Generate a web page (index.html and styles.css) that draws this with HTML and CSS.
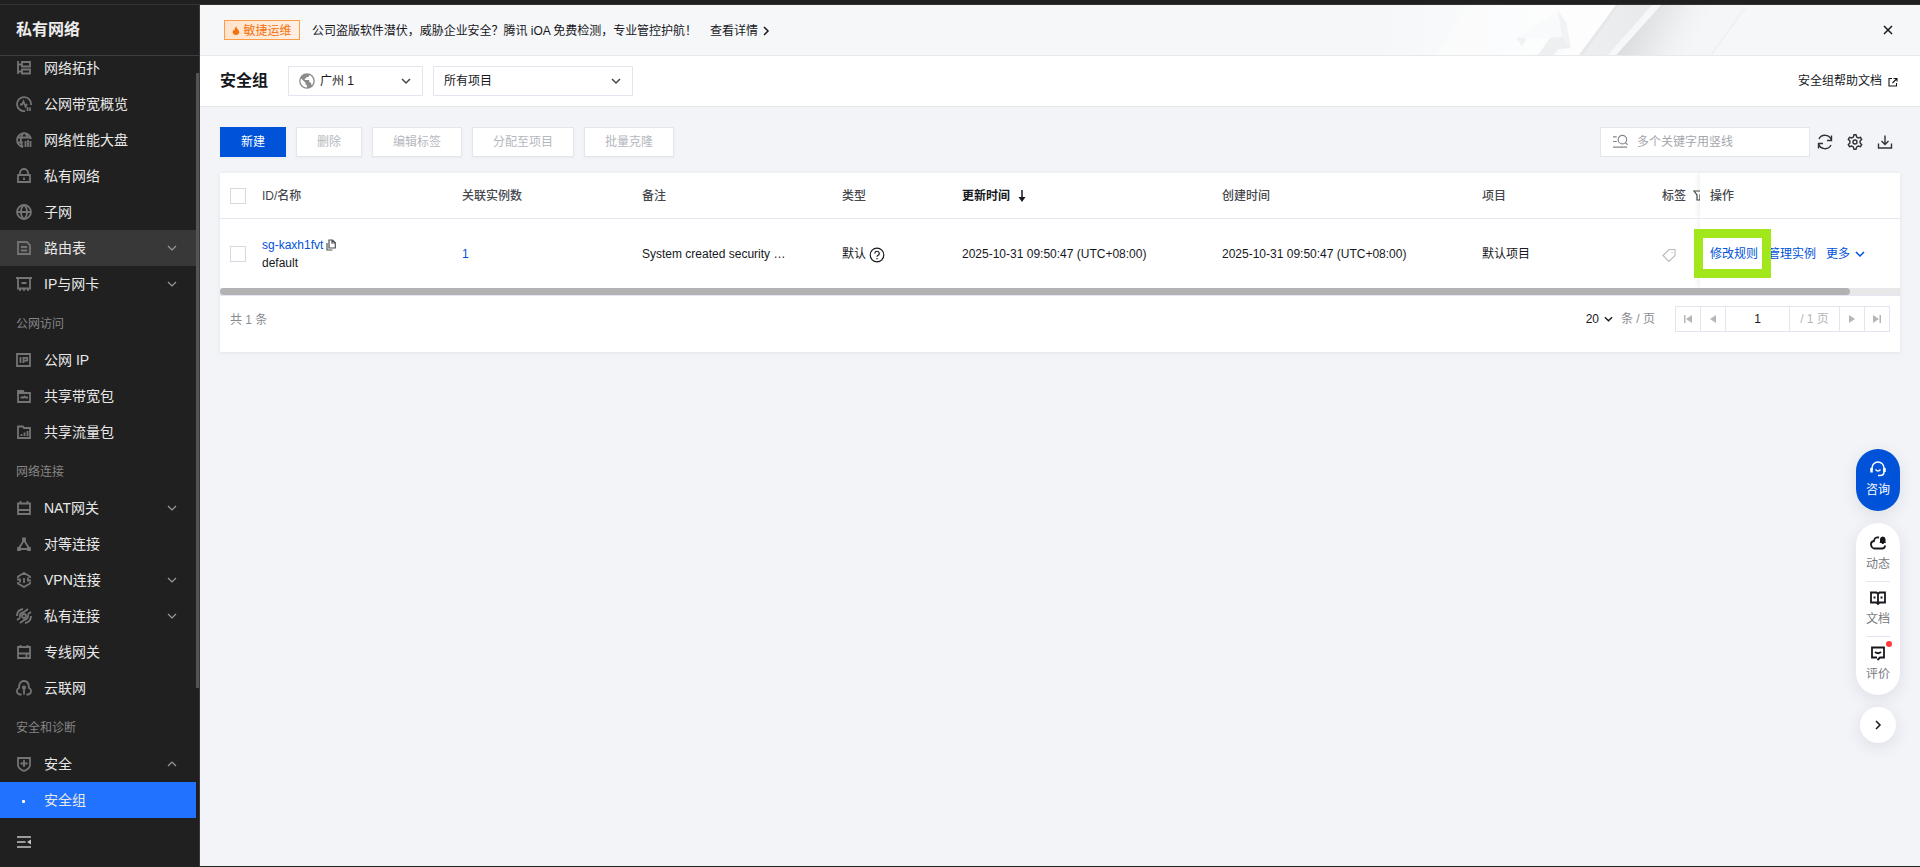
FILE: index.html
```html
<!DOCTYPE html>
<html lang="zh-CN">
<head>
<meta charset="utf-8">
<title>安全组 - 私有网络</title>
<link rel="stylesheet" href="styles.css">
</head>
<body>
<div class="topbar"></div>
<div class="layout">
  <aside class="sidebar">
    <h2 class="side-title">私有网络</h2>
    <div class="side-body">
      <nav class="menu">
        <a class="item first"><svg class="ic" viewBox="0 0 16 16"><path d="M2 1v13M2 4.500h4M2 11.500h4M6 2h8v4.500H6zM6 9.500h8v4H6z"/></svg><span>网络拓扑</span></a>
        <a class="item"><svg class="ic" viewBox="0 0 16 16"><path d="M9 15A7 7 0 1 1 15 9M4 8.500h2l1.500-3 2 5 1.500-2.500M11.500 11v4M14 11.500v3.500"/></svg><span>公网带宽概览</span></a>
        <a class="item"><svg class="ic" viewBox="0 0 16 16"><path d="M7 15A7 7 0 1 1 15 7M1.500 5.500h13M1.500 10.500H7M7.500 1C4 4 4 12 7 15M8.500 1q3 2 3 5M9.500 9v6M12 8v7M14.500 9v6"/></svg><span>网络性能大盘</span></a>
        <a class="item"><svg class="ic" viewBox="0 0 16 16"><path d="M2 7h12v7H2zM4 7V5a4 4 0 0 1 8 0v2M8 9.500v2.500"/></svg><span>私有网络</span></a>
        <a class="item"><svg class="ic" viewBox="0 0 16 16"><circle cx="8" cy="8" r="7"/><path d="M1 8h14M8 1C4 4 4 12 8 15M8 1c4 3 4 11 0 14"/></svg><span>子网</span></a>
        <a class="item hover"><svg class="ic" viewBox="0 0 16 16"><path d="M2 2h9l3 3v9H2zM5 7h6M5 10.500h6"/></svg><span>路由表</span><svg class="chev" viewBox="0 0 10 10"><path d="M1 3l4 4 4-4"/></svg></a>
        <a class="item"><svg class="ic" viewBox="0 0 16 16"><path d="M0 2h16M2 2v10.500h12V2M5.500 7h5M4 12v3M8 12v3M12 12v3"/></svg><span>IP与网卡</span><svg class="chev" viewBox="0 0 10 10"><path d="M1 3l4 4 4-4"/></svg></a>
        <div class="group">公网访问</div>
        <a class="item"><svg class="ic" viewBox="0 0 16 16"><path d="M1 2h13v12H1zM4.500 5v6M7.500 11V5.800h3.700v2.800H7.500"/></svg><span>公网 IP</span></a>
        <a class="item"><svg class="ic" viewBox="0 0 16 16"><path d="M2 14V3h5l1 2h6v9zM2 5h7M4.500 9.500h3l1-1 1 1H12"/></svg><span>共享带宽包</span></a>
        <a class="item"><svg class="ic" viewBox="0 0 16 16"><path d="M2 14V2.500h5l1 1.500h6v10zM5.500 12v-2M8.500 12V8.500M11.500 12V7"/></svg><span>共享流量包</span></a>
        <div class="group">网络连接</div>
        <a class="item"><svg class="ic" viewBox="0 0 16 16"><path d="M2 3.500h12V14H2zM2 10h12M4.500 1v3M11.500 1v3"/></svg><span>NAT网关</span><svg class="chev" viewBox="0 0 10 10"><path d="M1 3l4 4 4-4"/></svg></a>
        <a class="item"><svg class="ic" viewBox="0 0 16 16"><path d="M7 2.500h2v2H7zM7.500 5L3 12M8.500 5L13 12M3 13h10M2 12h2v2H2zM12 12h2v2h-2z"/></svg><span>对等连接</span></a>
        <a class="item"><svg class="ic" viewBox="0 0 16 16"><path d="M2 6V4.500L8 1l6 3.500V6M2 10v1.500L8 15l6-3.500V10M1 7.500h3v3M15 8.500h-3v-3M8 6v5"/></svg><span>VPN连接</span><svg class="chev" viewBox="0 0 10 10"><path d="M1 3l4 4 4-4"/></svg></a>
        <a class="item"><svg class="ic" viewBox="0 0 16 16"><circle cx="8" cy="8" r="2"/><path d="M1 8q0-6 6-7M15 8q0 6-6 7M4 10Q3 5 8 4l4-3M12 6q1 5-4 6l-4 3M1 12l3-2M15 4l-3 2"/></svg><span>私有连接</span><svg class="chev" viewBox="0 0 10 10"><path d="M1 3l4 4 4-4"/></svg></a>
        <a class="item"><svg class="ic" viewBox="0 0 16 16"><path d="M2 3h12v11H2zM2 9.500h12M10.500 10v4M4.500 1v3M11.500 1v3"/></svg><span>专线网关</span></a>
        <a class="item"><svg class="ic" viewBox="0 0 16 16"><path d="M5.500 14.500H4A3.400 3.400 0 0 1 3 8Q3 1 8 1t5 7a3.400 3.400 0 0 1-1 6.500h-1.500M8 14.500V8"/><circle cx="8" cy="7.500" r="1.200"/></svg><span>云联网</span></a>
        <div class="group">安全和诊断</div>
        <a class="item"><svg class="ic" viewBox="0 0 16 16"><path d="M2 2h12v7q0 3.500-6 6-6-2.500-6-6zM8 4v7M4.500 7.500h7"/></svg><span>安全</span><svg class="chev" viewBox="0 0 10 10"><path d="M1 7l4-4 4 4"/></svg></a>
        <a class="item active"><i class="dot"></i><span>安全组</span></a>
      </nav>
      <div class="side-scroll"></div>
    </div>
    <div class="side-foot"><svg viewBox="0 0 16 16"><path d="M1 3h14M1 8h8.500M1 13h14"/><path class="solid" d="M15 5.500v5L11 8z"/></svg></div>
  </aside>

  <main class="main">
    <div class="banner">
      <svg class="art" viewBox="0 0 380 50" preserveAspectRatio="none">
        <defs>
          <linearGradient id="glow"><stop offset="0" stop-color="#f6f7f9"/><stop offset=".4" stop-color="#f9fafb"/><stop offset="1" stop-color="#fefeff"/></linearGradient>
          <linearGradient id="bar"><stop offset="0" stop-color="#eeeff1"/><stop offset="1" stop-color="#e8e9eb"/></linearGradient>
          <linearGradient id="shade" gradientUnits="userSpaceOnUse" x1="255" y1="22" x2="310" y2="50"><stop offset="0" stop-color="#dddee0"/><stop offset=".35" stop-color="#e7e8ea"/><stop offset=".7" stop-color="#f1f2f4"/><stop offset="1" stop-color="#f5f6f8"/></linearGradient>
        </defs>
        <path d="M0 0h236l-36 50H0z" fill="url(#glow)"/>
        <path d="M88 0h148l-36 50H55z" fill="#fff" opacity=".3"/>
        <path d="M281 0h85l-34 50h-96z" fill="url(#shade)"/>
        <path d="M236 0h36l-44 50h-28z" fill="url(#bar)"/>
        <path d="M236 0h3l-36 50h-4z" fill="#e6e7e9"/>
        <path d="M272 0h9l-45 50h-8z" fill="#f6f7f9"/>
        <path d="M178 6l-42 27h34l-12 17h15l18-7-4-25z" fill="#f9fafb"/>
        <path d="M178 6l8 11 5 26-9-11z" fill="#f2f3f6"/>
        <path d="M170 33l12-1 9 11-13 1-5 6h-15z" fill="#eeeff1"/>
        <path d="M136 33h11l-5 8z" fill="#f1f2f4"/>
        <path d="M365 3l-34 47" stroke="#eff0f2"/>
      </svg>
      <span class="hot"><svg viewBox="0 0 10 12"><path d="M5.500 0Q5 2.500 7 4q3 2.500 2.300 5Q8.500 12 5 12T.5 8.500Q.3 6.500 2 5q.5 1 1 1Q3 2 5.500 0z"/></svg>敏捷运维</span>
      <span class="notice">公司盗版软件潜伏，威胁企业安全？腾讯 iOA 免费检测，专业管控护航！</span>
      <a class="detail">查看详情<svg viewBox="0 0 8 10"><path d="M2 1l4 4-4 4"/></svg></a>
      <svg class="close" viewBox="0 0 10 10"><path d="M1 1l8 8M9 1L1 9"/></svg>
    </div>

    <header class="page-head">
      <h1>安全组</h1>
      <div class="select region">
        <svg class="globe" viewBox="0 0 16 16"><circle cx="8" cy="8" r="7.800"/><path d="M2 5.500l4.500 4.300v1.400L8 12.500v2A6.500 6.500 0 0 1 2 5.500zM10.300 2q0 2-1.500 2H7.300v1.500H5.800V7h4.400v2.300h1.300l1.300 2.900A6.400 6.400 0 0 0 10.300 2z"/></svg>
        <span>广州 1</span><svg class="arrow" viewBox="0 0 10 10"><path d="M1 3l4 4 4-4"/></svg>
      </div>
      <div class="select project"><span>所有项目</span><svg class="arrow" viewBox="0 0 10 10"><path d="M1 3l4 4 4-4"/></svg></div>
      <a class="help">安全组帮助文档<svg viewBox="0 0 10 10"><path d="M4 1.500H1v7.500h7.500V6M5.500 1.500h3.500V4.500M9 1.500L4.500 6"/></svg></a>
    </header>

    <section class="content">
      <div class="toolbar">
        <button class="btn primary">新建</button>
        <button class="btn">删除</button>
        <button class="btn">编辑标签</button>
        <button class="btn">分配至项目</button>
        <button class="btn">批量克隆</button>
        <div class="search"><svg viewBox="0 0 16 16"><path d="M0 3h4M0 8h4M0 14h15"/><circle cx="10" cy="6" r="4.500"/><path d="M13 9l2.500 2.500"/></svg><span>多个关键字用竖线</span></div>
        <svg class="tool" viewBox="0 0 16 16"><path d="M14.500 6.500A6.700 6.700 0 0 0 2 5M1.500 9.500A6.700 6.700 0 0 0 14 11M14.500 1.500v5H10M1.500 14.500v-5H6"/></svg>
        <svg class="tool" viewBox="0 0 16 16"><path d="M6.300 3L7 .8h2L9.700 3l1.600.9 2.200-.6 1.200 2L13.100 7v2l1.600 1.700-1.200 2-2.200-.6-1.600.9L9 15.200H7L6.300 13l-1.600-.9-2.200.6-1.200-2L2.900 9V7L1.300 5.300l1.200-2 2.200.6z"/><circle cx="8" cy="8" r="2"/></svg>
        <svg class="tool" viewBox="0 0 16 16"><path d="M1.500 9.500V14h13V9.500M8 1.500V10M4.500 7L8 10.500 11.500 7"/></svg>
      </div>

      <div class="card">
        <div class="row head">
          <div><i class="check"></i></div>
          <div>ID/名称</div><div>关联实例数</div><div>备注</div><div>类型</div>
          <div class="sorted">更新时间<svg class="sort" viewBox="0 0 8 12"><path d="M4 0v9"/><path class="solid" d="M.5 7h7L4 12z"/></svg></div>
          <div>创建时间</div><div>项目</div>
          <div class="tagcol">标签<svg class="filter" viewBox="0 0 11 11"><path d="M1 1h9L7 5v5H4V5z"/></svg></div>
          <div class="fixed">操作</div>
        </div>
        <div class="row data">
          <div><i class="check"></i></div>
          <div class="name"><a>sg-kaxh1fvt<svg class="copy" viewBox="0 0 10 12"><path d="M3 1h3.500L9.300 3.800V9H3zM6 1v3h3M1 4v7h5.500"/></svg></a><span>default</span></div>
          <div><a>1</a></div>
          <div>System created security …</div>
          <div class="kind">默认<svg class="qm" viewBox="0 0 16 16"><circle cx="8" cy="8" r="6.800"/><path d="M5.800 6.500a2.200 2.200 0 1 1 3 2q-.8.400-.8 1.300M8 11v1.300"/></svg></div>
          <div>2025-10-31 09:50:47 (UTC+08:00)</div>
          <div>2025-10-31 09:50:47 (UTC+08:00)</div>
          <div>默认项目</div>
          <div><svg class="tag" viewBox="0 0 14 14"><path d="M1 7.500L7 1.500h6v6l-6 6z"/><path d="M9.500 4.500h1"/></svg></div>
          <div class="fixed ops"><a>修改规则</a><a>管理实例</a><a>更多<svg viewBox="0 0 10 10"><path d="M1 3l4 4 4-4"/></svg></a><i class="mark"></i></div>
        </div>
        <div class="hscroll"><i></i></div>
        <div class="pager">
          <span class="total">共 1 条</span>
          <span class="size">20<svg viewBox="0 0 10 10"><path d="M1 3l4 4 4-4"/></svg></span><span class="unit">条 / 页</span>
          <div class="pages">
            <span><svg viewBox="0 0 8 8"><path d="M0 0h1.500v8H0zM8 0v8L2 4z"/></svg></span>
            <span><svg viewBox="0 0 8 8"><path d="M7 0v8L1 4z"/></svg></span>
            <span class="num">1</span><span class="of">/ 1 页</span>
            <span><svg viewBox="0 0 8 8"><path d="M1 0v8l6-4z"/></svg></span>
            <span><svg viewBox="0 0 8 8"><path d="M6.500 0H8v8H6.500zM0 0v8l6-4z"/></svg></span>
          </div>
        </div>
      </div>
    </section>

    <div class="floats">
      <div class="ask"><svg viewBox="0 0 16 16"><path d="M2 9V7a6 6 0 0 1 12 0v4q0 3.500-4 3.500H8M5.500 8.500q2.500 3 5 0"/><path class="thick" d="M1.500 7v4.500M14.500 7v4"/></svg>咨询</div>
      <div class="panel">
        <div class="entry"><svg viewBox="0 0 16 16"><path d="M9 2.500Q4.500 1.500 4 6 .8 6.500 1 9.500T4 13.500h8.500q2.500-.3 2.500-3"/><path class="solid" d="M10 7V4q.3-2.500 2.800-2.500T15.500 4v3l.5 1h-2.200v1h-2V8H9.500z"/></svg>动态</div>
        <div class="entry"><svg viewBox="0 0 16 16"><path d="M1 2.500h5.500L8 4l1.500-1.500H15v10H9.500L8 14l-1.500-1.500H1zM8 4v10M3.500 7.500h2M10.500 7.500h2"/></svg>文档</div>
        <div class="entry"><svg viewBox="0 0 16 16"><path d="M7 12.500H2v-10h12v10h-4L7.500 15M5 7q3 2.500 6 0"/></svg>评价<i class="red"></i></div>
      </div>
      <div class="fold"><svg viewBox="0 0 8 10"><path d="M2 1l4 4-4 4"/></svg></div>
    </div>
  </main>
</div>
<div class="bottomline"></div>
</body>
</html>
```

FILE: styles.css
```css
* { box-sizing: border-box; }
body { margin: 0; height: 867px; overflow: hidden; display: flex; flex-direction: column; background: #f3f4f8; color: #16181d; font: 12px/18px "Liberation Sans", "Noto Sans CJK SC", sans-serif; }
svg { display: block; flex: none; fill: none; stroke: currentColor; stroke-width: 1.5; }
svg .solid { fill: currentColor; stroke: none; }
h1, h2 { margin: 0; font-size: 16px; font-weight: 700; }
a { color: #0052d9; }
.topbar { height: 5px; flex: none; background: #202020; border-bottom: 1px solid #333; }
.layout { flex: 1; display: flex; min-height: 0; }
.bottomline { height: 1px; flex: none; background: #222; }

/* sidebar */
.sidebar { width: 200px; flex: none; display: flex; flex-direction: column; background: #202020; border-right: 1px solid #3a3a3a; }
.side-title { height: 51px; flex: none; padding: 0 16px; border-bottom: 1px solid #3d3d3d; color: #ececec; line-height: 49px; }
.side-body { height: 762px; flex: none; display: flex; }
.menu { width: 196px; flex: none; }
.side-scroll { width: 3px; height: 615px; margin-top: 17px; background: #545454; }
.item { height: 36px; display: flex; align-items: center; padding: 0 19px 0 16px; gap: 12px; color: #e8e8e8; font-size: 14px; line-height: 20px; }
.item.first { height: 30px; padding-bottom: 6px; }
.item .ic { width: 16px; height: 16px; color: #747474; stroke-width: 1.8; }
.item .chev { width: 10px; height: 10px; margin-left: auto; color: #999; stroke-width: 1.2; }
.item.hover { background: #383838; }
.item.active { background: #2173ff; }
.item .dot { width: 3px; height: 3px; margin: 2px 7px 0 6px; background: #fff; border-radius: 1px; }
.group { height: 40px; padding: 13px 16px 0; color: #858585; }
.side-foot { flex: 1; display: flex; align-items: center; padding-left: 16px; color: #c4c4c4; }
.side-foot svg { width: 16px; height: 16px; }

/* banner and page header */
.main { flex: 1; position: relative; min-width: 0; }
.banner { position: relative; height: 51px; display: flex; align-items: center; padding: 0 27px 0 24px; background: #f6f7f9; border-bottom: 1px solid #e7e9ed; }
.art { position: absolute; top: 0; right: 160px; width: 380px; height: 50px; stroke: none; }
.hot { width: 76px; height: 20px; display: flex; align-items: center; justify-content: center; gap: 3px; border: 1px solid #ff9c4a; background: linear-gradient(90deg, #ffe3cd, #fff0e3); color: #f5700a; line-height: 20px; padding-top: 1px; }
.hot svg { width: 8px; height: 9px; fill: currentColor; stroke: none; }
.notice { width: 380px; margin: 1px 18px 0 12px; white-space: nowrap; letter-spacing: -0.03px; }
.detail { display: flex; align-items: center; gap: 4px; margin-top: 1px; color: #16181d; }
.detail svg, .fold svg { width: 8px; height: 10px; }
.close { width: 10px; height: 10px; margin-left: auto; }
.page-head { height: 51px; display: flex; align-items: center; padding: 0 22px 0 20px; background: #fff; border-bottom: 1px solid #e7e9ed; }
.page-head h1 { width: 68px; }
.select { height: 30px; display: flex; align-items: center; padding: 0 11px 0 10px; border: 1px solid #e3e6ee; }
.region { width: 135px; margin-right: 10px; gap: 5px; }
.project { width: 200px; }
.arrow { width: 10px; height: 10px; margin-left: auto; color: #45474d; }
.globe { width: 16px; height: 16px; stroke: none; }
.globe circle { fill: #8a8a8a; }
.globe path { fill: #fff; }
.help { margin-left: auto; display: flex; align-items: center; gap: 6px; color: #16181d; }
.help svg { width: 10px; height: 10px; stroke-width: 1.1; margin-top: 1px; }

/* toolbar */
.content { padding: 20px 20px 0; }
.toolbar { display: flex; align-items: center; gap: 10px; height: 30px; }
.btn { height: 30px; padding: 0; border: 1px solid #e3e6ee; background: #fff; color: #b5b8be; font: inherit; box-shadow: 0 1px 2px #0000000a; }
.btn.primary { color: #fff; background: #0052d9; border-color: #0052d9; }
.btn:nth-child(-n+2) { width: 66px; }
.btn:nth-child(3), .btn:nth-child(5) { width: 90px; }
.btn:nth-child(4) { width: 102px; }
.search { width: 210px; height: 30px; margin-left: auto; margin-right: -3px; display: flex; align-items: center; gap: 9px; padding-left: 12px; border: 1px solid #e3e6ee; background: #fff; color: #a3a6ad; }
.search svg { width: 15px; height: 15px; margin-top: -2px; color: #85878c; stroke-width: 1.3; }
.tool { width: 16px; height: 16px; color: #303236; stroke-width: 1.4; margin-right: 4px; }
.tool:last-child { margin-right: 7px; }

/* table card */
.card { height: 179px; margin-top: 16px; background: #fff; box-shadow: 0 1px 4px #363b5018; }
.row { display: grid; grid-template-columns: 42px 200px 180px 200px 120px 260px 260px 180px 38px 200px; align-items: center; }
.row > div { white-space: nowrap; }
.head { height: 46px; border-bottom: 1px solid #e5e8f0; font-weight: 500; color: #45474d; }
.head > div { overflow: hidden; }
.data { height: 69px; }
.check { display: block; width: 16px; height: 16px; margin-left: 10px; border: 1px solid #d5d9e2; background: #fff; }
.sorted { display: flex; align-items: center; gap: 8px; font-weight: 700; color: #16181d; }
.sort { width: 8px; height: 12px; }
.tagcol { display: flex; align-items: center; gap: 7px; }
.filter { width: 11px; height: 11px; stroke-width: 1.2; }
.fixed { align-self: stretch; display: flex; align-items: center; padding-left: 10px; background: #fff; box-shadow: -3px 0 4px #0000000c; clip-path: inset(0 0 0 -8px); }
.name { display: flex; flex-direction: column; }
.name a, .kind { display: flex; align-items: center; gap: 3px; }
.copy { width: 10px; height: 12px; color: #4f5157; stroke-width: 1.2; }
.qm { width: 16px; height: 16px; margin-top: 2px; stroke-width: 1.2; }
.tag { width: 14px; height: 14px; margin-top: 2px; color: #b8bbc0; stroke-width: 1.1; }
.ops { position: relative; gap: 10px; }
.ops a { display: flex; align-items: center; gap: 5px; }
.ops svg { width: 10px; height: 10px; }
.mark { position: absolute; left: -6px; top: 10px; width: 77px; height: 49px; border: 9px solid #a2e61c; }
.hscroll { height: 8px; border-bottom: 1px solid #e5e8f0; background: #e8e8e8; }
.hscroll i { display: block; width: 1630px; height: 7px; border-radius: 4px; background: #b2b2b2; }

/* pagination */
.pager { height: 56px; display: flex; align-items: flex-start; padding: 10px 10px 0; color: #888b91; line-height: 26px; }
.total { padding-top: 1px; }
.size { margin-left: auto; display: flex; align-items: center; gap: 5px; margin-right: 8px; color: #16181d; }
.size svg { width: 9px; height: 10px; }
.unit { width: 54px; }
.pages { display: flex; border: 1px solid #e1e5ee; height: 26px; line-height: 24px; color: #b4b6bb; }
.pages span { width: 25px; display: flex; align-items: center; justify-content: center; border-right: 1px solid #e1e5ee; }
.pages span:last-child { width: 24px; border: 0; }
.pages .num { width: 64px; color: #16181d; }
.pages .of { width: 50px; }
.pages svg { width: 8px; height: 8px; fill: #b4b6bb; stroke: none; }

/* floating helpers */
.floats { position: absolute; right: 20px; top: 444px; width: 44px; display: flex; flex-direction: column; align-items: center; gap: 12px; }
.floats > div { background: #fff; box-shadow: 0 4px 16px #363b501c; }
.floats .ask { width: 44px; height: 62px; padding-top: 12px; display: flex; flex-direction: column; align-items: center; gap: 4px; border-radius: 22px; background: #0052d9; color: #fff; }
.floats svg { width: 16px; height: 16px; }
.thick { stroke-width: 2.5; }
.floats .panel { width: 44px; height: 172px; padding: 12px 0; border-radius: 22px; }
.entry { position: relative; width: 24px; height: 55px; margin: 0 auto; display: flex; flex-direction: column; align-items: center; gap: 4px; color: #777a80; white-space: nowrap; }
.entry svg { color: #16181d; stroke-width: 1.8; }
.entry + .entry { border-top: 1px solid #e3e6ee; padding-top: 8px; }
.entry:first-child { height: 46px; }
.red { position: absolute; left: 20px; top: 4px; width: 6px; height: 6px; border-radius: 50%; background: #ff3b3b; }
.floats .fold { width: 36px; height: 36px; display: flex; align-items: center; justify-content: center; border-radius: 50%; }
.floats .fold svg { width: 8px; height: 10px; }
```
